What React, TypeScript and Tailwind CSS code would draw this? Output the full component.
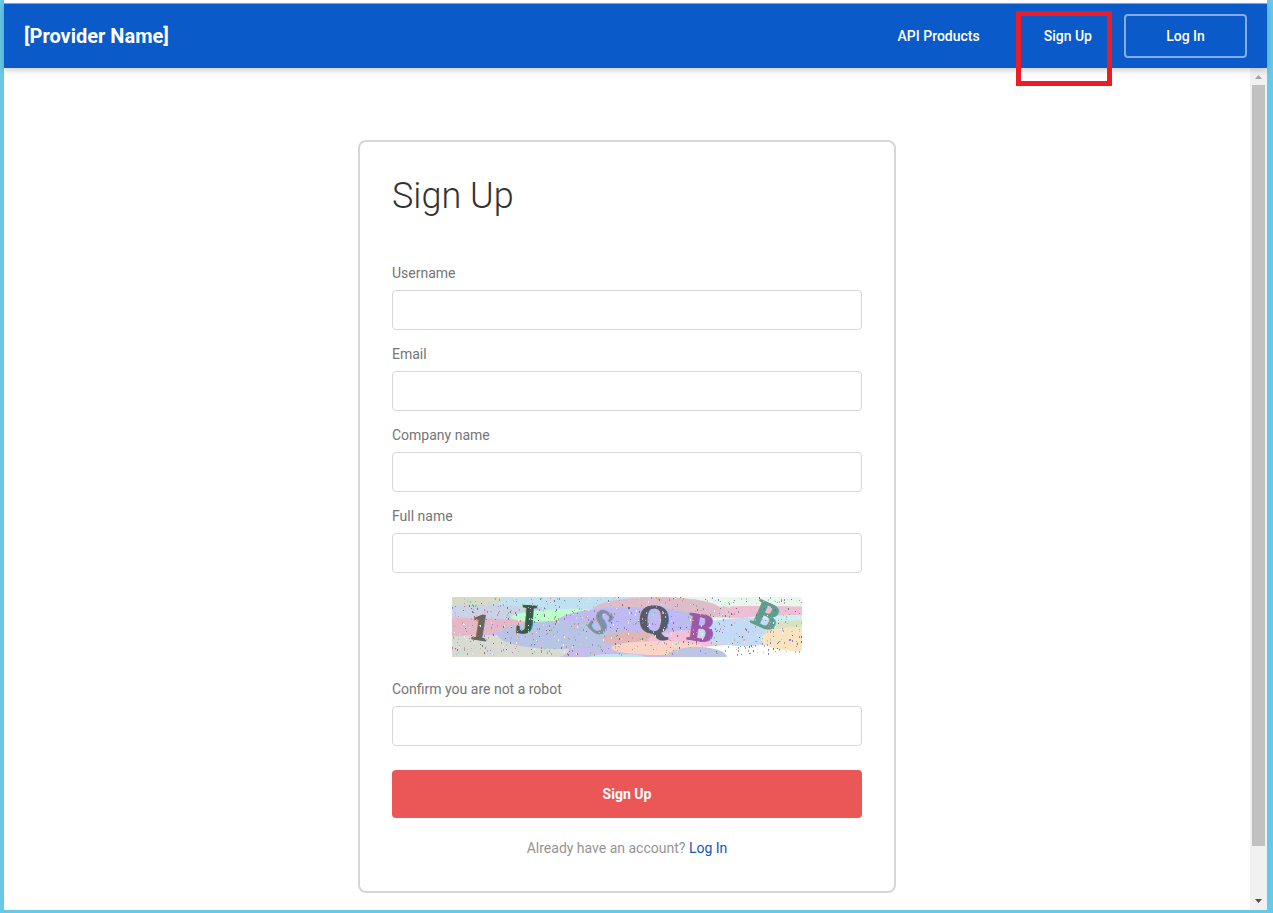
import { useId } from 'react'

const fields = [
  { name: 'username', label: 'Username', type: 'text' },
  { name: 'email', label: 'Email', type: 'email' },
  { name: 'company', label: 'Company name', type: 'text' },
  { name: 'fullname', label: 'Full name', type: 'text' },
]

const blobs = [
  { cx: 8, cy: 2, rx: 42, ry: 9, fill: '#d8dac8' },
  { cx: 30, cy: 17, rx: 76, ry: 9, fill: '#c9d2e6' },
  { cx: 10, cy: 32, rx: 92, ry: 11, fill: '#e3b9ca' },
  { cx: 120, cy: 54, rx: 110, ry: 26, fill: '#c7bdea' },
  { cx: 135, cy: 20, rx: 76, ry: 8, fill: '#bbffca' },
  { cx: 250, cy: 10, rx: 62, ry: 14, fill: '#e9f6ec' },
  { cx: 310, cy: 6, rx: 70, ry: 10, fill: '#e9f6ec' },
  { cx: 310, cy: 15, rx: 95, ry: 6, fill: '#edbfd6' },
  { cx: 205, cy: 13, rx: 64, ry: 13, fill: '#dfbcca' },
  { cx: 180, cy: 26, rx: 76, ry: 16, fill: '#c0baf4' },
  { cx: 35, cy: 53, rx: 82, ry: 15, fill: '#d9dbd2' },
  { cx: 106, cy: 38, rx: 60, ry: 14, fill: '#b8c4e5' },
  { cx: 192, cy: 42, rx: 42, ry: 8, fill: '#deb6b6' },
  { cx: 248, cy: 43, rx: 52, ry: 10, fill: '#f1c1d9' },
  { cx: 310, cy: 54, rx: 70, ry: 7, fill: '#ffffff' },
  { cx: 207, cy: 51, rx: 48, ry: 7, fill: '#fdd3c6' },
  { cx: 245, cy: 60, rx: 30, ry: 10, fill: '#bcc5e3' },
  { cx: 340, cy: 25, rx: 60, ry: 7, fill: '#c6f1f5' },
  { cx: 292, cy: 35, rx: 46, ry: 14, fill: '#c5daf6' },
  { cx: 352, cy: 32, rx: 40, ry: 9, fill: '#dce0c2' },
  { cx: 345, cy: 42, rx: 36, ry: 12, fill: '#fae4bf' },
  { cx: 165, cy: 61, rx: 30, ry: 4, fill: '#bfe4f0' },
]

const letters = [
  { char: '1', x: 28, y: 43, size: 38, rotate: 9, fill: '#6b655c' },
  { char: 'J', x: 74, y: 36, size: 42, rotate: 4, fill: '#355b49' },
  { char: 'S', x: 149, y: 37, size: 36, rotate: 38, fill: '#7e92a6' },
  { char: 'Q', x: 202, y: 36, size: 41, rotate: 2, fill: '#555a6c' },
  { char: 'B', x: 249, y: 44, size: 40, rotate: 8, fill: '#9c57ab' },
  { char: 'B', x: 314, y: 31, size: 38, rotate: 24, fill: '#5f9d91' },
]

const speckColors = ['#7a7585', '#d98a98', '#7fbf91', '#8b87d6', '#d0aa78', '#8ee0b4', '#b07ab5', '#a9c8e8', '#f3efff', '#5f7a78', '#c4f0c9', '#e9a9c9']

// small fixed-seed generator so the speckles stay put between renders
function makeSpecks(count: number) {
  let seed = 4711
  const next = () => {
    seed = (seed * 16807) % 2147483647
    return seed / 2147483647
  }
  return Array.from({ length: count }, () => ({
    x: Math.floor(next() * 350),
    y: Math.floor(next() * 58),
    h: 1 + Math.floor(next() * 2),
    fill: speckColors[Math.floor(next() * speckColors.length)],
  }))
}

const specks = makeSpecks(900)

function Captcha() {
  return (
    <svg
      viewBox="0 0 350 60"
      className="mx-auto my-6 block h-[60px] w-[350px] max-w-full overflow-visible"
      role="img"
      aria-label="Captcha"
    >
      <svg width="350" height="60">
        <rect width="350" height="60" fill="#c0e1f2" />
        <rect x="268" y="18" width="82" height="42" fill="#ffffff" />
        {blobs.map((b, i) => (
          <ellipse key={i} {...b} />
        ))}
      </svg>
      {letters.map((l) => (
        <text
          key={l.x}
          x={l.x}
          y={l.y}
          fontSize={l.size}
          fill={l.fill}
          stroke={l.fill}
          strokeWidth="1"
          textAnchor="middle"
          transform={`rotate(${l.rotate} ${l.x} ${l.y - 12})`}
          className="font-['Liberation_Serif',serif] font-bold"
        >
          {l.char}
        </text>
      ))}
      {specks.map((s, i) => (
        <rect key={i} x={s.x} y={s.y} width="1" height={s.h} fill={s.fill} shapeRendering="crispEdges" />
      ))}
    </svg>
  )
}

function Field({ name, label, type }: { name: string; label: string; type: string }) {
  const id = useId()
  return (
    <div>
      <label htmlFor={id} className="mb-2 block text-[14px] leading-[17px] text-[#757575]">
        {label}
      </label>
      <input
        id={id}
        name={name}
        type={type}
        className="block h-10 w-full rounded border border-[#d6d6d6] bg-white px-3 text-[14px] text-[#333333] outline-none focus:border-[#0a5bca]"
      />
    </div>
  )
}

function Header() {
  return (
    <header className="relative z-10 flex h-16 shrink-0 items-center justify-between bg-[#0a5aca] px-5 text-white shadow-[0_2px_6px_rgba(0,0,0,0.22)]">
      <a href="#" className="text-[20px] leading-6 font-bold">
        [Provider Name]
      </a>
      <nav className="flex h-full items-center text-[14px] font-medium">
        <a href="#products" className="px-8">
          API Products
        </a>
        <a href="#signup" className="relative flex h-full items-center px-8">
          Sign Up
          <span className="absolute -bottom-[18px] left-1 right-3 top-[7px] border-5 border-[#ed1c24]" />
        </a>
        <a
          href="#login"
          className="flex h-11 w-[123px] items-center justify-center rounded border-2 border-white/50"
        >
          Log In
        </a>
      </nav>
    </header>
  )
}

function ScrollRail() {
  return (
    <div className="flex w-[17px] shrink-0 flex-col items-center bg-[#f1f1f1]" aria-hidden="true">
      <svg viewBox="0 0 17 17" className="h-[17px] w-[17px]">
        <path d="M5 11h7L8.500 7z" fill="#a3a3a3" />
      </svg>
      <div className="mb-[47px] w-[13px] flex-1 bg-[#c1c1c1]" />
      <svg viewBox="0 0 17 17" className="h-[17px] w-[17px]">
        <path d="M5 6h7L8.500 10z" fill="#505050" />
      </svg>
    </div>
  )
}

export default function App() {
  return (
    <div className="flex min-h-screen flex-col border-r-6 border-b-3 border-l-4 border-[#66c9e8] bg-white font-['Roboto',sans-serif]">
      <div className="h-1 shrink-0 border-b border-[#a6a6a6]" />
      <Header />
      <div className="flex flex-1">
        <main className="flex-1 px-4 pt-[72px] pb-[17px]">
          <form
            className="mx-auto w-full max-w-[538px] rounded-lg border-2 border-[#d6d6d6] p-8"
            onSubmit={(e) => e.preventDefault()}
          >
            <h1 className="mb-[46px] text-[36px] leading-[45px] font-light text-[#333333]">Sign Up</h1>
            <div className="flex flex-col gap-4">
              {fields.map((f) => (
                <Field key={f.name} {...f} />
              ))}
            </div>
            <Captcha />
            <Field name="captcha" label="Confirm you are not a robot" type="text" />
            <button
              type="submit"
              className="mt-6 block h-12 w-full rounded bg-[#eb5757] text-[14px] font-bold text-white"
            >
              Sign Up
            </button>
            <p className="mt-5 text-center text-[14px] leading-[21px] text-[#949494]">
              Already have an account?{' '}
              <a href="#login" className="text-[#1355b8]">
                Log In
              </a>
            </p>
          </form>
        </main>
        <ScrollRail />
      </div>
    </div>
  )
}
